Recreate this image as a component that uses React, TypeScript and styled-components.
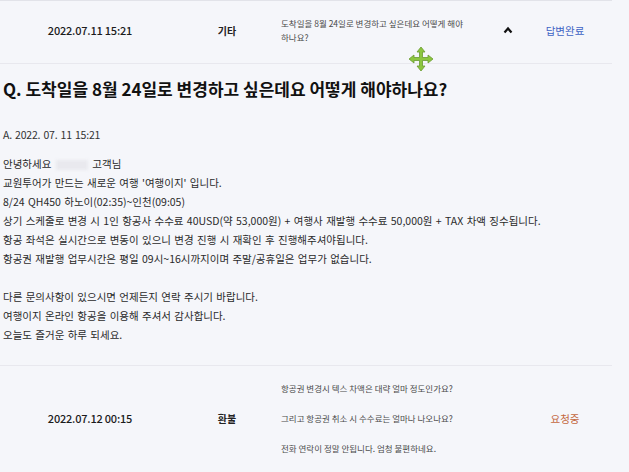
import React from 'react';
import styled, { createGlobalStyle } from 'styled-components';

const Global = createGlobalStyle`
  html, body {
    margin: 0;
    padding: 0;
    background: #f5f6fa;
  }
  body {
    font-family: "Noto Sans CJK KR", "Noto Sans", sans-serif;
    color: #222;
  }
`;

const List = styled.div`
  position: relative;
  width: 612px;
  height: 472px;
  overflow: hidden;
  border-top: 1px solid #e2e3e9;
`;

const Row = styled.div<{ $pad: string }>`
  display: grid;
  grid-template-columns: 180px 94px 220px 28px 90px;
  align-items: center;
  padding: ${(p) => p.$pad};
  border-bottom: 1px solid #e8e8ee;
`;

const DateCell = styled.div`
  text-align: center;
  font-size: 11px;
  font-weight: 500;
  letter-spacing: -0.2px;
  color: #1c1c1c;
`;

const Category = styled.div`
  text-align: center;
  font-size: 10px;
  font-weight: 700;
  color: #222;
`;

const TitleCell = styled.div<{ $lh: number }>`
  padding-left: 7px;
  font-size: 8.5px;
  line-height: ${(p) => p.$lh}px;
  color: #4a4a4a;
  p {
    margin: 0;
  }
`;

const Chevron = styled.div`
  display: flex;
  justify-content: center;
  align-items: center;
`;

const Status = styled.div<{ $color: string }>`
  text-align: center;
  font-size: 10.5px;
  color: ${(p) => p.$color};
  margin-left: -4px;
`;

const Answer = styled.div`
  padding: 13px 0 21px 3px;
  border-bottom: 1px solid #e8e8ee;
`;

const Question = styled.h2`
  margin: 0;
  font-size: 17px;
  line-height: 24px;
  font-weight: 700;
  color: #111;
`;

const AnswerDate = styled.div`
  margin-top: 26px;
  font-size: 10.5px;
  line-height: 16px;
  word-spacing: 1px;
  color: #333;
  letter-spacing: -0.2px;
`;

const Body = styled.div`
  margin-top: 11px;
  font-size: 10.5px;
  line-height: 19px;
  word-spacing: 1px;
  color: #2a2a2a;
  p {
    margin: 0;
    min-height: 19px;
  }
`;

const Blurred = styled.span`
  display: inline-block;
  width: 32px;
  height: 10px;
  margin: 0 4px 0 5px;
  vertical-align: middle;
  background: #e9e9ee;
  filter: blur(1.5px);
`;

const Cursor = styled.svg`
  position: absolute;
  left: 408px;
  top: 45px;
`;

const MoveCursor = () => (
  <Cursor width="26" height="26" viewBox="0 0 26 26">
    <path
      d="M13 1 L17 6 L14.5 6 L14.5 11.5 L20 11.5 L20 9 L25 13 L20 17 L20 14.5 L14.5 14.5 L14.5 20 L17 20 L13 25 L9 20 L11.5 20 L11.5 14.5 L6 14.5 L6 17 L1 13 L6 9 L6 11.5 L11.5 11.5 L11.5 6 L9 6 Z"
      fill="#8cc63f"
      stroke="#6a9a30"
      strokeWidth="0.8"
      strokeLinejoin="round"
    />
  </Cursor>
);

const App: React.FC = () => {
  return (
    <List>
      <Global />
      <Row $pad="15px 0 19px">
        <DateCell>2022.07.11 15:21</DateCell>
        <Category>기타</Category>
        <TitleCell $lh={14}>
          도착일을 8월 24일로 변경하고 싶은데요 어떻게 해야
          <br />
          하나요?
        </TitleCell>
        <Chevron>
          <svg width="10" height="8" viewBox="0 0 10 8">
            <polyline points="1.5,6.5 5,2.5 8.5,6.5" fill="none" stroke="#111" strokeWidth="2.2" />
          </svg>
        </Chevron>
        <Status $color="#3d63c4">답변완료</Status>
      </Row>
      <Answer>
        <Question>Q. 도착일을 8월 24일로 변경하고 싶은데요 어떻게 해야하나요?</Question>
        <AnswerDate>A. 2022. 07. 11 15:21</AnswerDate>
        <Body>
          <p>
            안녕하세요<Blurred />고객님
          </p>
          <p>교원투어가 만드는 새로운 여행 '여행이지' 입니다.</p>
          <p>8/24 QH450 하노이(02:35)~인천(09:05)</p>
          <p>상기 스케줄로 변경 시 1인 항공사 수수료 40USD(약 53,000원) + 여행사 재발행 수수료 50,000원 + TAX 차액 징수됩니다.</p>
          <p>항공 좌석은 실시간으로 변동이 있으니 변경 진행 시 재확인 후 진행해주셔야됩니다.</p>
          <p>항공권 재발행 업무시간은 평일 09시~16시까지이며 주말/공휴일은 업무가 없습니다.</p>
          <p />
          <p>다른 문의사항이 있으시면 언제든지 연락 주시기 바랍니다.</p>
          <p>여행이지 온라인 항공을 이용해 주셔서 감사합니다.</p>
          <p>오늘도 즐거운 하루 되세요.</p>
        </Body>
      </Answer>
      <Row $pad="7px 0 11px">
        <DateCell>2022.07.12 00:15</DateCell>
        <Category>환불</Category>
        <TitleCell $lh={30}>
          <p>항공권 변경시 텍스 차액은 대략 얼마 정도인가요?</p>
          <p>그리고 항공권 취소 시 수수료는 얼마나 나오나요?</p>
          <p>전화 연락이 정말 안됩니다. 엄청 불편하네요.</p>
        </TitleCell>
        <div />
        <Status $color="#c4683e">요청중</Status>
      </Row>
      <MoveCursor />
    </List>
  );
};

export default App;
